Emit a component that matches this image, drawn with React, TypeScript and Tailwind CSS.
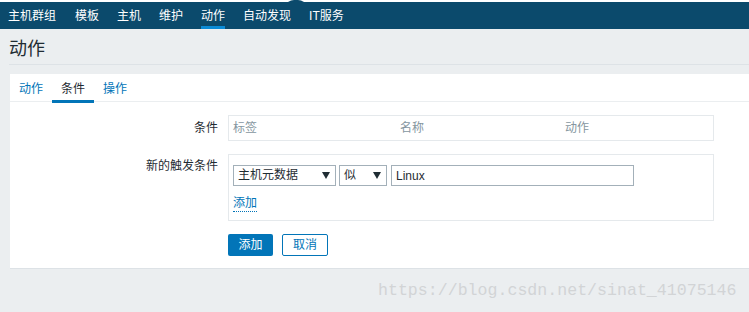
import React from "react";

const navItems = ["主机群组", "模板", "主机", "维护", "动作", "自动发现", "IT服务"];

function Arrow() {
  return (
    <svg width="8" height="7" viewBox="0 0 8 7" className="shrink-0">
      <path d="M0 0 L8 0 L4 7 Z" fill="#1f2c33" />
    </svg>
  );
}

export default function App() {
  return (
    <div className="relative w-[749px] h-[312px] overflow-hidden bg-[#ebeef0] font-['Liberation_Sans','Noto_Sans_CJK_SC',sans-serif] text-[12px] text-[#1f2c33]">
      {/* white strip with notch */}
      <div className="relative h-[2px] bg-white">
        <svg className="absolute left-[288px] top-0" width="16" height="2" viewBox="0 0 16 2">
          <path d="M0 2 Q3 0 6 0 L10 0 Q13 0 16 2 Z" fill="#0b4a6c" />
        </svg>
      </div>
      {/* top nav */}
      <div className="flex h-[27px] bg-[#0b4a6c] pl-[8px] gap-[18px]">
        {navItems.map((item, i) => (
          <div
            key={item}
            className={
              "flex items-center h-full pt-[3px] border-b-[3px] leading-none text-white " +
              (i === 4 ? "border-[#0b8bd6] " : "border-transparent ") +
              (i === 1 ? "ml-[1px]" : "")
            }
          >
            {item}
          </div>
        ))}
      </div>
      {/* header */}
      <div className="ml-[9px] h-[36px] border-b border-[#dde2e6] pt-[8px]">
        <div className="text-[18px] leading-[24px] text-[#1f2c33]">动作</div>
      </div>
      {/* panel */}
      <div className="ml-[10px] mt-[9px] h-[195px] bg-white border-b border-[#dde2e6]">
        <div className="flex h-[28px] border-b border-[#ebeef0]">
          {["动作", "条件", "操作"].map((t, i) => (
            <div
              key={t}
              className={
                "flex items-center h-[29px] px-[9px] pt-[3px] border-b-[3px] leading-none " +
                (i === 1 ? "border-[#0275b8] text-[#1f2c33]" : "border-transparent text-[#0275b8]")
              }
            >
              {t}
            </div>
          ))}
        </div>
        <div className="flex flex-col pt-[13px] gap-[13px]">
          {/* row 1 */}
          <div className="flex gap-[10px]">
            <div className="w-[208px] text-right pt-[6px] leading-[14px]">条件</div>
            <div className="w-[486px] h-[26px] border border-[#e5e9ec] grid grid-cols-[167px_165px_1fr] items-center pl-[4px] text-[#8596a0] leading-none">
              <div>标签</div>
              <div>名称</div>
              <div>动作</div>
            </div>
          </div>
          {/* row 2 */}
          <div className="flex gap-[10px]">
            <div className="w-[208px] text-right pt-[5px] leading-[14px]">新的触发条件</div>
            <div className="w-[486px] h-[67px] border border-[#e5e9ec] pl-[4px] pt-[9px]">
              <div className="flex items-center">
                <div className="flex items-center justify-between w-[103px] h-[21px] border border-[#a3b0b9] pl-[4px] pr-[5px] leading-none">
                  <span>主机元数据</span>
                  <Arrow />
                </div>
                <div className="ml-[3px] flex items-center justify-between w-[48px] h-[21px] border border-[#a3b0b9] pl-[4px] pr-[5px] leading-none">
                  <span>似</span>
                  <Arrow />
                </div>
                <div className="ml-[4px] mt-[1px] flex items-center w-[243px] h-[21px] border border-[#a3b0b9] pl-[4px] leading-none">
                  Linux
                </div>
              </div>
              <div className="mt-[10px] inline-block text-[#0275b8] leading-[14px] border-b border-dotted border-[#0275b8] pb-[1px]">
                添加
              </div>
            </div>
          </div>
          {/* buttons */}
          <div className="flex pl-[218px] gap-[9px]">
            <div className="flex items-center justify-center w-[45px] h-[22px] bg-[#0275b8] text-white rounded-[2px] leading-none">
              添加
            </div>
            <div className="flex items-center justify-center w-[46px] h-[22px] bg-white border border-[#0275b8] text-[#0275b8] rounded-[2px] leading-none">
              取消
            </div>
          </div>
        </div>
      </div>
      {/* watermark */}
      <div className="absolute left-[378px] top-[280px] font-['Liberation_Mono',monospace] text-[16.6px] leading-[22px] text-[#d2d4d6]">
        https://blog.csdn.net/sinat_41075146
      </div>
    </div>
  );
}
